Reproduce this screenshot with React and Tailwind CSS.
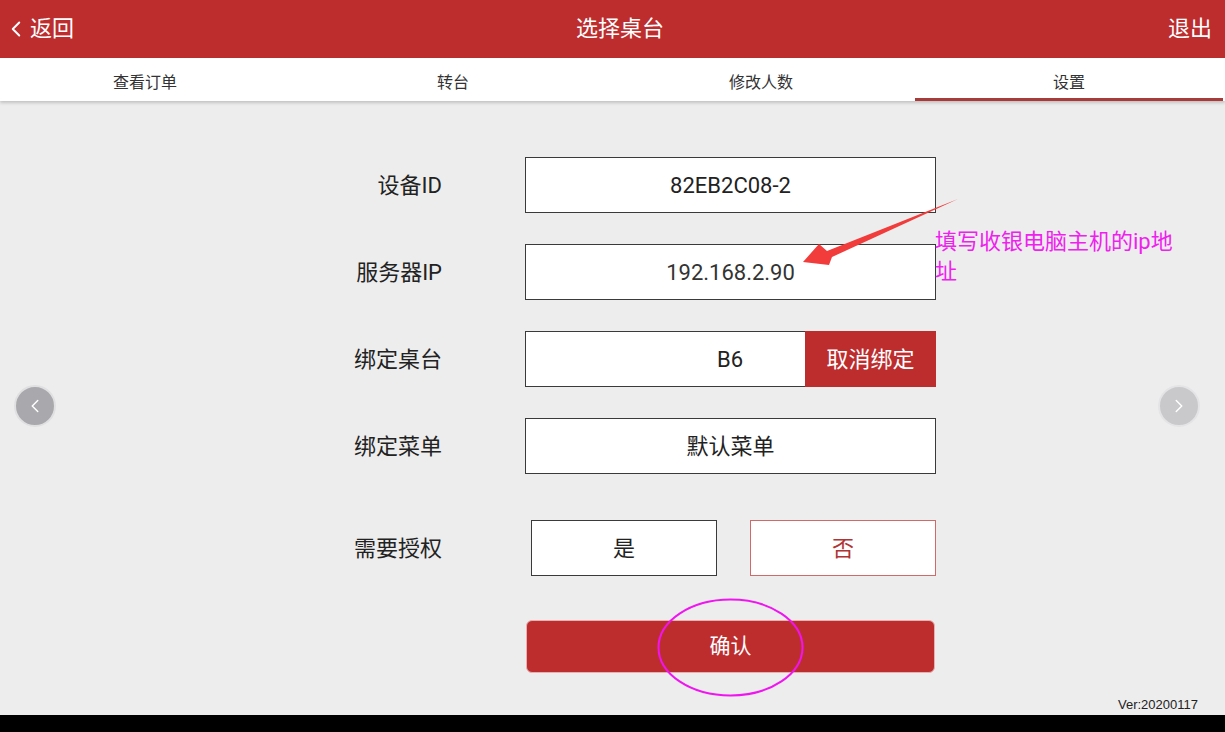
import { ChevronLeft, ChevronRight } from 'lucide-react';

const TABS = ['查看订单', '转台', '修改人数', '设置'];

const FIELDS = [
  { label: '设备ID', value: '82EB2C08-2' },
  { label: '服务器IP', value: '192.168.2.90', light: true },
  { label: '绑定桌台', value: 'B6', action: '取消绑定' },
  { label: '绑定菜单', value: '默认菜单' },
];

const font = { fontFamily: 'Roboto, "Noto Sans CJK SC", sans-serif' };

export default function App() {
  return (
    <div className="w-[1225px] h-[732px] flex flex-col bg-[#ededed] relative overflow-hidden" style={font}>
      {/* header */}
      <header className="h-[58px] shrink-0 bg-[#bd2d2e] text-white flex items-center pl-[3px] pr-[6px]">
        <div className="flex items-center gap-[1px] w-[200px]">
          <ChevronLeft className="w-[26px] h-[26px]" strokeWidth={1.8} />
          <span className="text-[22px] leading-none">返回</span>
        </div>
        <div className="flex-1 text-center text-[22px] leading-none pl-[18px]">选择桌台</div>
        <div className="w-[200px] text-right text-[22px] leading-none pr-[7px]">退出</div>
      </header>

      {/* tabs */}
      <nav className="h-[43px] shrink-0 bg-white flex shadow-[0_2px_3px_rgba(0,0,0,0.18)] z-10">
        <div className="flex -ml-[9px]">
          {TABS.map((t, i) => (
            <div
              key={t}
              className={`w-[308px] flex items-center justify-center text-[16px] text-[#333] pt-[9px] ${
                i === 3 ? 'border-b-[3px] border-[#a83a3a]' : 'border-b-[3px] border-transparent'
              }`}
            >
              {t}
            </div>
          ))}
        </div>
      </nav>

      {/* content */}
      <main className="flex-1 relative pt-[56px] pl-[300px]">
        <div className="flex flex-col gap-[31px] w-[636px]">
          {FIELDS.map((f) => (
            <div key={f.label} className="flex items-center">
              <div className="w-[142px] text-right text-[22px] text-[#222]">{f.label}</div>
              <div className="ml-[83px] w-[411px] h-[56px] bg-white border border-[#3a3a3a] flex">
                {f.action ? (
                  <>
                    <div className="flex-1 flex items-center justify-end pr-[62px] text-[22px] text-[#222]">
                      {f.value}
                    </div>
                    <button className="w-[131px] -my-px -mr-px bg-[#bd2d2e] text-white text-[22px]">
                      {f.action}
                    </button>
                  </>
                ) : (
                  <div className={`flex-1 flex items-center justify-center text-[22px] ${f.light ? 'text-[#333]' : 'text-[#222]'}`}>
                    {f.value}
                  </div>
                )}
              </div>
            </div>
          ))}

          <div className="flex items-center mt-[15px]">
            <div className="w-[142px] text-right text-[22px] text-[#222]">需要授权</div>
            <div className="ml-[89px] flex gap-[33px]">
              <button className="w-[186px] h-[56px] bg-white border border-[#3a3a3a] text-[22px] text-[#222]">是</button>
              <button className="w-[186px] h-[56px] bg-white border border-[#d06a6a] text-[22px] text-[#b03434]">否</button>
            </div>
          </div>

          <div className="flex mt-[13px]">
            <button className="ml-[226px] w-[409px] h-[53px] rounded-[6px] bg-[#bd2d2e] border border-[#e8b0b0] text-white text-[21px]">
              确认
            </button>
          </div>
        </div>

        {/* carousel arrows */}
        <button className="absolute left-[14px] top-[284px] w-[42px] h-[42px] rounded-full bg-[#a9a9ad] border-2 border-[#e0e0e2] flex items-center justify-center">
          <ChevronLeft className="w-[22px] h-[22px] text-white" strokeWidth={1.6} />
        </button>
        <button className="absolute left-[1158px] top-[284px] w-[42px] h-[42px] rounded-full bg-[#c9c9cb] border-2 border-[#e4e4e6] flex items-center justify-center">
          <ChevronRight className="w-[22px] h-[22px] text-white" strokeWidth={1.6} />
        </button>

        <div className="absolute right-[27px] bottom-[1px] text-[13px] text-[#222]" style={{ fontFamily: '"Liberation Sans", Arial, sans-serif' }}>
          Ver:20200117
        </div>
      </main>

      <div className="h-[17px] shrink-0 bg-black" />

      {/* annotations */}
      <svg className="absolute inset-0 pointer-events-none" width="1225" height="732">
        <polygon points="958,199 827,251 819,244 803,262 829,265 832,257" fill="#f23b3b" />
        <ellipse cx="730.5" cy="647.5" rx="72" ry="48" fill="none" stroke="#f014f0" strokeWidth="2" />
      </svg>
      <div className="absolute left-[935px] top-[227px] w-[248px] text-[22px] leading-[30px] text-[#f020f0] break-all">
        填写收银电脑主机的ip地址
      </div>
    </div>
  );
}
